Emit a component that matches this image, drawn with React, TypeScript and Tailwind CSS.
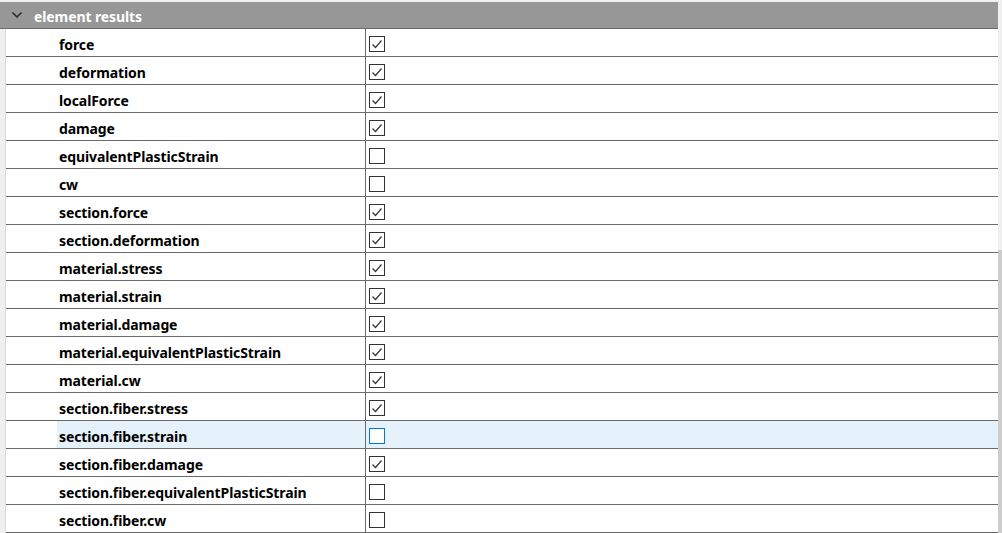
import { ChevronDown } from "lucide-react";

type Item = { name: string; on: boolean };

const items: Item[] = [
  { name: "force", on: true },
  { name: "deformation", on: true },
  { name: "localForce", on: true },
  { name: "damage", on: true },
  { name: "equivalentPlasticStrain", on: false },
  { name: "cw", on: false },
  { name: "section.force", on: true },
  { name: "section.deformation", on: true },
  { name: "material.stress", on: true },
  { name: "material.strain", on: true },
  { name: "material.damage", on: true },
  { name: "material.equivalentPlasticStrain", on: true },
  { name: "material.cw", on: true },
  { name: "section.fiber.stress", on: true },
  { name: "section.fiber.strain", on: false },
  { name: "section.fiber.damage", on: true },
  { name: "section.fiber.equivalentPlasticStrain", on: false },
  { name: "section.fiber.cw", on: false },
];

const SELECTED = "section.fiber.strain";

function Check({ on, focus }: { on: boolean; focus: boolean }) {
  return (
    <div
      className={
        "w-4 h-4 bg-white border flex items-center justify-center " +
        (focus ? "border-[#0078d7]" : "border-[#333333]")
      }
    >
      {on && (
        <svg width="12" height="10" viewBox="0 0 12 10" fill="none">
          <path d="M1.5 5.5 L4.5 8.5 L10.5 1.5" stroke="#333333" strokeWidth="1.2" />
        </svg>
      )}
    </div>
  );
}

function Row({ item }: { item: Item }) {
  const sel = item.name === SELECTED;
  return (
    <div className="flex h-[28px] border-b border-[#6a6a6a]">
      <div className="w-[360px] flex border-r border-[#6a6a6a]">
        <div className="w-[51px] bg-white" />
        <div className={"flex-1 flex items-center pl-[2px] pt-[5px] " + (sel ? "bg-[#e5f1fb]" : "bg-white")}>
          <span className="text-[14px] leading-none font-bold text-black tracking-[-0.1px]">{item.name}</span>
        </div>
      </div>
      <div className={"flex-1 flex items-center pl-[3px] pt-[2px] " + (sel ? "bg-[#e5f1fb]" : "bg-white")}>
        <Check on={item.on} focus={sel} />
      </div>
    </div>
  );
}

export default function App() {
  return (
    <div
      className="w-[1002px] h-[533px] flex bg-white overflow-hidden"
      style={{ fontFamily: '"Noto Sans", "Open Sans", sans-serif' }}
    >
      <div className="flex-1 flex flex-col">
        <div className="h-[2px] bg-[#f0f0f0]" />
        {/* group header */}
        <div className="h-[28px] bg-[#979797] border-b border-[#6a6a6a] flex items-center">
          <ChevronDown size={16} strokeWidth={2.5} className="ml-[9px] text-[#2b2b2b]" />
          <span className="ml-[9px] pt-[4px] text-[14px] leading-none font-bold text-white tracking-[-0.1px]">
            element results
          </span>
        </div>
        <div className="flex-1 flex">
          <div className="w-[6px] bg-[#f0f0f0] border-r border-[#dcdcdc]" />
          <div className="flex-1 flex flex-col">
            {items.map((it) => (
              <Row key={it.name} item={it} />
            ))}
          </div>
        </div>
      </div>
      {/* scrollbar */}
      <div className="w-[4px] flex flex-col bg-[#f0f0f0]">
        <div className="h-[250px]" />
        <div className="flex-1 bg-[#cdcdcd]" />
      </div>
    </div>
  );
}
